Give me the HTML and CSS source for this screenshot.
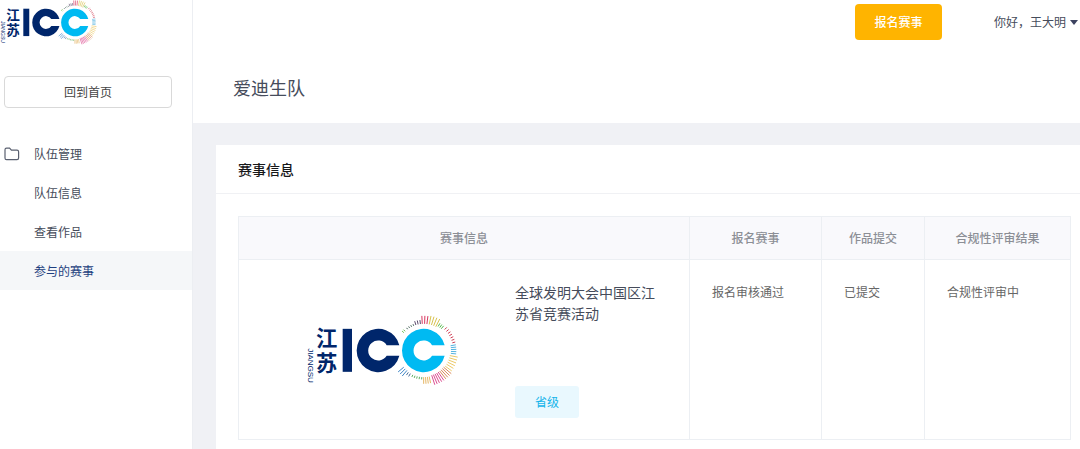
FILE: index.html
```html
<!DOCTYPE html>
<html lang="zh-CN">
<head>
  <meta charset="UTF-8" />
  <meta name="viewport" content="width=device-width, initial-scale=1.0" />
  <title>参与的赛事</title>
  <link rel="stylesheet" href="styles.css">
</head>
<body>
  <div class="layout">
    <aside class="sidebar">
      <a class="brand" href="#">
        <svg class="brand-logo" viewBox="0 0 456 212" role="img" aria-label="江苏ICC">
          <g class="rays"></g>
          <g class="logo-navy">
            <text class="logo-cn" x="27" y="93">江</text>
            <text class="logo-cn" x="27" y="167">苏</text>
            <text class="logo-en" transform="translate(4 99) rotate(90)">JIANGSU</text>
            <path d="M107 41h28v129h-28z" />
            <path d="M277 90A65 65 0 1 0 277 122L239 122A30 30 0 1 1 239 90Z" />
          </g>
          <path class="logo-cyan" d="M413 90A65 65 0 1 0 413 122L375 122A30 30 0 1 1 375 90Z" />
        </svg>
      </a>
      <button class="back-button" type="button">回到首页</button>
      <nav class="menu">
        <a class="menu-item" href="#">
          <svg class="menu-icon" viewBox="0 0 16 14"><path d="M1 2.8Q1 1.2 2.6 1.2H5.6L7.4 3.2H13Q14.6 3.2 14.6 4.8V11Q14.6 12.6 13 12.6H2.6Q1 12.6 1 11Z" /></svg>
          队伍管理
        </a>
        <a class="menu-item" href="#">队伍信息</a>
        <a class="menu-item" href="#">查看作品</a>
        <a class="menu-item active" href="#">参与的赛事</a>
      </nav>
    </aside>

    <main class="main">
      <header class="header">
        <div class="topbar">
          <button class="signup-button" type="button">报名赛事</button>
          <button class="user-button" type="button">你好，王大明<span class="caret"></span></button>
        </div>
        <h1 class="team-name">爱迪生队</h1>
      </header>

      <section class="card">
        <h2 class="card-title">赛事信息</h2>
        <div class="card-body">
          <table class="contest-table">
            <colgroup>
              <col>
              <col class="col-signup">
              <col class="col-work">
              <col class="col-review">
            </colgroup>
            <thead>
              <tr>
                <th>赛事信息</th>
                <th>报名赛事</th>
                <th>作品提交</th>
                <th>合规性评审结果</th>
              </tr>
            </thead>
            <tbody>
              <tr>
                <td>
                  <div class="contest">
                    <div class="contest-cover">
                      <svg class="contest-logo" viewBox="0 0 456 212" role="img" aria-label="江苏ICC">
                        <g class="rays"></g>
                        <g class="logo-navy">
                          <text class="logo-cn" x="27" y="93">江</text>
                          <text class="logo-cn" x="27" y="167">苏</text>
                          <text class="logo-en" transform="translate(4 99) rotate(90)">JIANGSU</text>
                          <path d="M107 41h28v129h-28z" />
                          <path d="M277 90A65 65 0 1 0 277 122L239 122A30 30 0 1 1 239 90Z" />
                        </g>
                        <path class="logo-cyan" d="M413 90A65 65 0 1 0 413 122L375 122A30 30 0 1 1 375 90Z" />
                      </svg>
                    </div>
                    <div class="contest-info">
                      <div class="contest-name">全球发明大会中国区江苏省竞赛活动</div>
                      <span class="tag">省级</span>
                    </div>
                  </div>
                </td>
                <td>报名审核通过</td>
                <td>已提交</td>
                <td>合规性评审中</td>
              </tr>
            </tbody>
          </table>
        </div>
      </section>
    </main>
  </div>

  <script>
    // rays around the second C: start angle, end angle, step, inner radius, outer radius, color
    const rays = [
      [-48, -42, 4, 80, 87, "#6cc04a"],
      [-37, -22, 5, 80, 85, "#3b5b50"],
      [-17, -7, 5, 80, 92, "#5c4a6c"],
      [-3, 8, 5, 80, 104, "#d8365f"],
      [12, 27, 5, 80, 106, "#d8c24e"],
      [31, 39, 4, 84, 95, "#55b94d"],
      [45, 75, 5, 89, 98, "#cf4056"],
      [80, 97, 4, 82, 98, "#56b4e0"],
      [101, 126, 5, 80, 104, "#ecc967"],
      [130, 142, 4, 78, 108, "#d98a5c"],
      [146, 164, 4, 78, 108, "#dc4c90"],
      [168, 180, 4, 80, 100, "#e5b768"],
      [184, 205, 5, 80, 87, "#5fae63"],
      [210, 215, 5, 80, 90, "#4a6f9c"],
      [220, 231, 5, 78, 100, "#3f86c6"]
    ];

    function drawRays(group, cx, cy) {
      rays.forEach(([start, end, step, inner, outer, color]) => {
        const path = document.createElementNS("http://www.w3.org/2000/svg", "path");
        let d = "";
        for (let a = start; a <= end; a += step) {
          const x = Math.sin(a * Math.PI / 180);
          const y = -Math.cos(a * Math.PI / 180);
          d += `M${cx + x * inner} ${cy + y * inner}L${cx + x * outer} ${cy + y * outer}`;
        }
        path.setAttribute("d", d);
        path.setAttribute("stroke", color);
        group.appendChild(path);
      });
    }

    document.querySelectorAll(".rays").forEach((group) => drawRays(group, 350, 106));
  </script>
</body>
</html>
```
FILE: styles.css
```css
* {
  box-sizing: border-box;
}

body {
  margin: 0;
  font-family: "Noto Sans CJK SC", sans-serif;
  font-size: 12px;
  line-height: 20px;
  color: #464c5b;
  background-color: #f0f1f5;
}

button {
  font: inherit;
  color: inherit;
  cursor: pointer;
}

a {
  color: inherit;
  text-decoration: none;
}

/* Logo */
.rays {
  stroke-width: 3;
}

.logo-navy {
  fill: #00266b;
}

.logo-cyan {
  fill: #00baf2;
}

.logo-cn {
  font-size: 64px;
  font-weight: bold;
}

.logo-en {
  font-family: "Liberation Sans", sans-serif;
  font-size: 24px;
}

.layout {
  display: flex;
  min-height: 100vh;
}

/* Sidebar */
.sidebar {
  display: flex;
  flex-direction: column;
  flex: 0 0 193px;
  background-color: #fff;
  border-right: 1px solid #eceef2;
}

.brand {
  height: 76px;
}

.brand-logo {
  display: block;
  width: 98px;
  height: 45px;
}

.back-button {
  height: 32px;
  margin: 0 20px 26px 4px;
  padding: 0;
  color: #444;
  background-color: #fff;
  border: 1px solid #d9d9d9;
  border-radius: 4px;
}

.menu-item {
  display: flex;
  align-items: center;
  height: 39px;
  padding-left: 34px;
}

.menu-icon {
  width: 16px;
  height: 14px;
  margin: 0 14px 0 -30px;
  fill: none;
  stroke: #5a6070;
  stroke-width: 1.2;
}

.menu-item.active {
  color: #1d3f80;
  background-color: #f5f7f9;
}

/* Header */
.main {
  display: flex;
  flex-direction: column;
  flex: 1;
  min-width: 0;
}

.header {
  height: 123px;
  background-color: #fff;
}

.topbar {
  display: flex;
  align-items: center;
  justify-content: flex-end;
  gap: 52px;
  height: 44px;
  padding-right: 2px;
}

.signup-button {
  width: 87px;
  height: 36px;
  padding: 0;
  font-weight: 500;
  color: #fff;
  background-color: #ffb400;
  border: none;
  border-radius: 4px;
}

.user-button {
  display: flex;
  align-items: center;
  gap: 4px;
  padding: 0;
  background: none;
  border: none;
}

.caret {
  border: 4px solid transparent;
  border-top: 5px solid #3c4260;
  border-bottom: none;
}

.team-name {
  margin: 29px 0 0 40px;
  font-size: 18px;
  font-weight: normal;
  line-height: 28px;
}

/* Contest card */
.card {
  flex: 1;
  margin: 22px 0 0 23px;
  background-color: #fff;
}

.card-title {
  margin: 0;
  padding: 14px 22px;
  font-size: 14px;
  font-weight: 500;
  color: #17181a;
  border-bottom: 1px solid #f0f1f4;
}

.card-body {
  padding: 22px 9px 9px 22px;
}

.contest-table {
  width: 100%;
  table-layout: fixed;
  border-collapse: collapse;
}

.col-signup {
  width: 132px;
}

.col-work {
  width: 103px;
}

.col-review {
  width: 146px;
}

.contest-table th,
.contest-table td {
  border: 1px solid #eceff3;
}

.contest-table th {
  height: 43px;
  padding: 0;
  font-weight: 500;
  color: #8c8f96;
  background-color: #f9f9fc;
}

.contest-table td {
  padding: 22px 22px 21px;
  vertical-align: top;
  color: #666;
}

.contest {
  display: flex;
  gap: 10px;
  height: 136px;
}

.contest-cover {
  display: flex;
  flex: 1;
  align-items: center;
  justify-content: center;
}

.contest-logo {
  width: 152px;
  height: 71px;
}

.contest-info {
  display: flex;
  flex-direction: column;
  align-items: flex-start;
  justify-content: space-between;
  width: 152px;
}

.contest-name {
  font-size: 14px;
  line-height: 21px;
  color: #464c5b;
}

.tag {
  padding: 6px 20px;
  color: #14b4ea;
  background-color: #e9f8fe;
  border-radius: 3px;
}
```
